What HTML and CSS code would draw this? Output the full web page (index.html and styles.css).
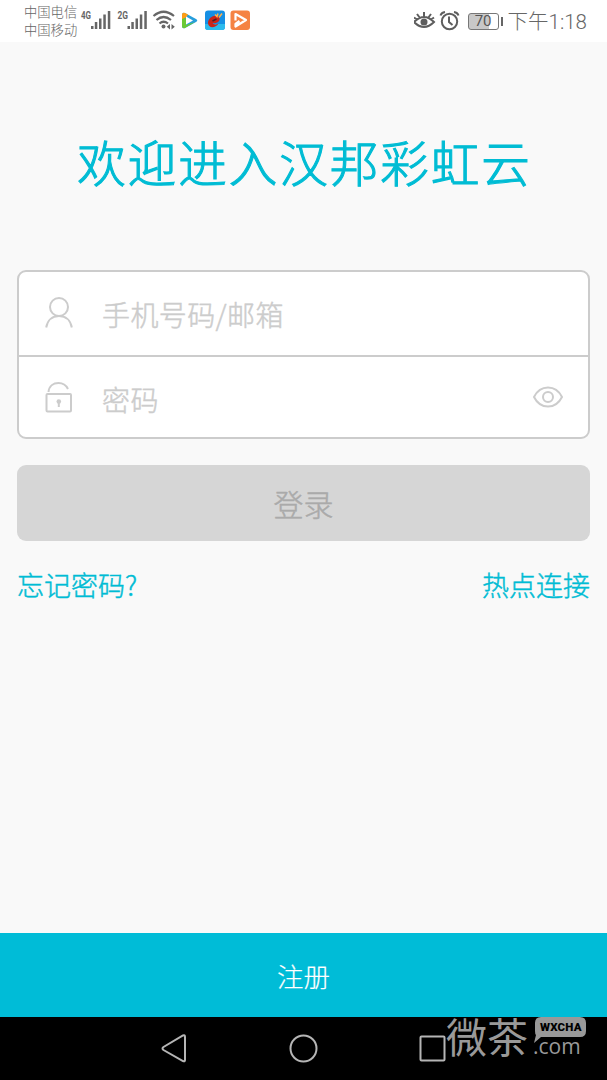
FILE: index.html
```html
<!DOCTYPE html>
<html lang="zh-CN">
<head>
  <meta charset="UTF-8">
  <meta name="viewport" content="width=device-width, initial-scale=1.0">
  <title>汉邦彩虹云</title>
  <link rel="stylesheet" href="styles.css">
</head>
<body>
  <header class="status-bar">
    <div class="carriers"><span>中国电信</span><span>中国移动</span></div>
    <svg class="status-icons" width="176" height="42" viewBox="0 0 176 42">
      <g class="net"><text x="1" y="19" textLength="10" lengthAdjust="spacingAndGlyphs">4G</text><text x="37.500" y="19" textLength="10.500" lengthAdjust="spacingAndGlyphs">2G</text></g>
      <g fill="#666">
        <path id="signal" d="M11 26h2.500v3H11zM14.800 22h2.500v7h-2.500zM19 18.500h2.500V29H19zM23.300 14.500h2.500V29h-2.500zM27.800 11h2.500v18h-2.500z"/>
        <use href="#signal" x="36.500"/>
        <circle cx="83.500" cy="26.500" r="2"/>
        <path d="M90 24v5.500l-3.300-2.700zM91.500 24v5.500l3.300-2.700z"/>
      </g>
      <g fill="none" stroke="#666" stroke-width="2.200">
        <path d="M73.500 16q10-8.500 20.500 0M76.500 20q7-6 14.500 0M79.500 23.500q4-3.500 8.500 0"/>
      </g>
      <path d="M102 15q0-3 3-2l11 6q2.500 1.500 0 3l-11 6q-3 1-3-2z" fill="#279edc"/>
      <path d="M102 26V17l4 2v6l9-3-10 6q-3 1-3-2z" fill="#6bc935"/>
      <path d="M102 19v-4q0-3 3-2l3 1.600-2 3z" fill="#ff9d13"/>
      <path d="M106 16.500l7 4-7 4z" fill="#fff"/>
      <rect x="125" y="10.500" width="20" height="19.500" rx="3" fill="#168fe4"/>
      <path d="M125 24h20v3q0 3-3 3h-14q-3 0-3-3z" fill="#2cbbed"/>
      <path d="M138.500 16.500c-4-2.500-10.500 1-10.500 6.500 0 5 7 6 10.500.500-3 1.500-5 1-6-.500 6 1 9-3.500 6-6.500z" fill="#cb2418"/>
      <path d="M132.500 21l4-2" stroke="#42202a" stroke-width="1.500"/>
      <path d="M135 14.500l2 2 1-3M139 17.500l3-4" fill="none" stroke="#ffb04a" stroke-width="1.500"/>
      <rect x="150.500" y="10.500" width="19.500" height="19.500" rx="3" fill="#f58343"/>
      <path d="M155.500 20.500V14l10.500 6-10.500 6.500v-2.500l4-3" fill="none" stroke="#fff" stroke-width="2.200" stroke-linejoin="round"/>
    </svg>
    <div class="status-right">
      <svg width="47" height="42" viewBox="0 0 47 42" fill="none" stroke="#5e5e5e" stroke-width="2">
        <path d="M0 22q10-10 20 0-10 10-20 0zM10 12v5M3 14l3 4M17 14l-3 4M0 17.500l3 2M20 17.500l-3 2"/>
        <circle cx="10" cy="22" r="3.500" fill="#5e5e5e" stroke="none"/>
        <circle cx="35.500" cy="21.500" r="7.700"/>
        <path d="M35 16.500v5.500l3.500 3M26.500 15.500q1-3 4.500-3.500M44.500 15.500q-1-3-4.500-3.500"/>
      </svg>
      <div class="battery"><span>70</span></div>
      <span class="clock">下午1:18</span>
    </div>
  </header>
  <main class="login">
    <h1>欢迎进入汉邦彩虹云</h1>
    <form>
      <div class="fields">
        <label class="field">
          <svg width="28" height="32" viewBox="0 0 28 32">
            <circle cx="14" cy="10" r="9"/>
            <path d="M1.200 30.500C2.500 23 7.500 19 14 19s11.500 4 12.800 11.500"/>
          </svg>
          <input type="text" placeholder="手机号码/邮箱">
        </label>
        <label class="field">
          <svg width="28" height="32" viewBox="0 0 28 32">
            <rect x="1.500" y="13" width="24.500" height="17.500" rx="1"/>
            <path d="M3.500 11C4 5 8.500 2 13.500 2c4.500 0 7.500 2 9.500 6M13.800 21v5"/>
            <circle class="keyhole" cx="13.800" cy="20.500" r="2.300"/>
          </svg>
          <input type="password" placeholder="密码">
          <svg class="eye" width="30" height="22" viewBox="0 0 30 22">
            <path d="M1 11C4 5 9 1.500 15 1.500S26 5 29 11C26 17 21 20.500 15 20.500S4 17 1 11z"/>
            <circle cx="15" cy="11" r="5"/>
          </svg>
        </label>
      </div>
      <button class="submit" type="button">登录</button>
    </form>
    <div class="links">
      <a href="#">忘记密码?</a>
      <a href="#">热点连接</a>
    </div>
  </main>
  <button class="register">注册</button>
  <footer class="nav-bar">
    <svg width="290" height="63" viewBox="0 0 290 63">
      <path d="M24 20v23q0 2-2 1L2.500 33q-2-1.500 0-3L22 18.500q2-1 2 1.500z"/>
      <circle cx="142.500" cy="31.500" r="13"/>
      <rect x="259.500" y="19.500" width="24" height="24" rx="1"/>
    </svg>
    <div class="watermark">
      <span class="mark-name">微茶</span>
      <svg width="53" height="28" viewBox="0 0 53 28"><path d="M7 0h39q6 0 6 6v8q0 6-6 6H7L0 26l2-8q-1-1-1-4V6q0-6 6-6z"/></svg>
      <span class="mark-tag">WXCHA</span>
      <span class="mark-com">.com</span>
    </div>
  </footer>
</body>
</html>
```

FILE: styles.css
```css
* { box-sizing: border-box; }
body { margin: 0; height: 1080px; display: flex; flex-direction: column; overflow: hidden; background-color: #f9f9f9; font-family: "Noto Sans CJK SC", sans-serif; font-weight: 300; -webkit-text-stroke: 0.45px; }
button, input { font-family: inherit; font-weight: inherit; border: none; outline: none; padding: 0; }

.status-bar { display: flex; height: 42px; padding: 0 20px 0 24px; background-color: white; color: #666; -webkit-text-stroke: 0; }
.carriers { display: flex; flex-direction: column; width: 56px; padding-top: 3px; font-size: 13.3px; line-height: 18px; white-space: nowrap; }
.net { font: bold 11px Roboto, sans-serif; fill: #666; }
.status-right { display: flex; align-items: center; margin-left: auto; }
.battery { position: relative; width: 31px; height: 17px; margin: 0 9px 0 7px; border: 1px solid #777; border-radius: 3px; background: linear-gradient(to right, #c8c8c8 68%, white 68%); font: 15px/15px Roboto, sans-serif; text-align: center; color: #555; }
.battery::after { content: ""; position: absolute; right: -5px; top: 3px; width: 2px; height: 9px; background-color: #666; }
.clock { padding-top: 2px; font-family: Roboto, "Noto Sans CJK SC", sans-serif; font-size: 20.5px; line-height: 40px; white-space: nowrap; }

.login { flex: 1; padding: 0 17px; }
.login h1 { margin: 82px 0 0 2px; text-align: center; font-size: 48.5px; font-weight: 300; line-height: 74px; letter-spacing: 2px; color: #00bcd4; white-space: nowrap; -webkit-text-stroke: 1.1px; }
.fields { height: 169px; margin-top: 72px; border: 2px solid #ccc; border-radius: 9px; background-color: white; }
.field { display: flex; align-items: center; height: 83px; padding: 0 25px 0 26px; }
.field + .field { height: 82px; border-top: 2px solid #ccc; }
.field svg { flex: none; fill: none; stroke: #ccc; stroke-width: 2; margin-bottom: 1px; }
.field .eye { margin-bottom: 1px; }
.field input { flex: 1; min-width: 0; height: 60px; margin-left: 29px; background: none; font-size: 28px; letter-spacing: 0.4px; }
.field + .field input { margin-top: 3px; }
.field input::placeholder { color: #ccc; opacity: 1; }
.field .keyhole { fill: #ccc; stroke: none; }
.submit { display: block; width: 100%; height: 76px; margin-top: 26px; padding-bottom: 1px; border-radius: 9px; background-color: #d6d6d6; font-size: 30px; color: #aaa; }
.links { display: flex; justify-content: space-between; margin-top: 24px; font-size: 27px; line-height: 40px; }
.links a { color: #00bcd4; text-decoration: none; }

.register { height: 84px; background-color: #00bcd7; font-size: 26.5px; color: white; -webkit-text-stroke: 0.2px; }
.nav-bar { position: relative; height: 63px; padding-left: 161px; background-color: black; -webkit-text-stroke: 0; }
.nav-bar > svg { display: block; fill: none; stroke: #b5b5b5; stroke-width: 2; }

/* site mark lies over the navigation bar */
.watermark { position: absolute; left: 446px; top: 0; width: 150px; height: 50px; color: #999; }
.watermark > * { position: absolute; }
.watermark svg { left: 88px; top: 0; fill: #999; }
.mark-name { left: 0; top: -10px; font-size: 41px; line-height: 56px; font-weight: 400; white-space: nowrap; }
.mark-tag { left: 94px; top: 2px; font: 900 11.500px/16px Roboto, sans-serif; letter-spacing: 0.2px; color: black; }
.mark-com { left: 87px; top: 16px; font: 21px/26px "Open Sans", sans-serif; }
```
